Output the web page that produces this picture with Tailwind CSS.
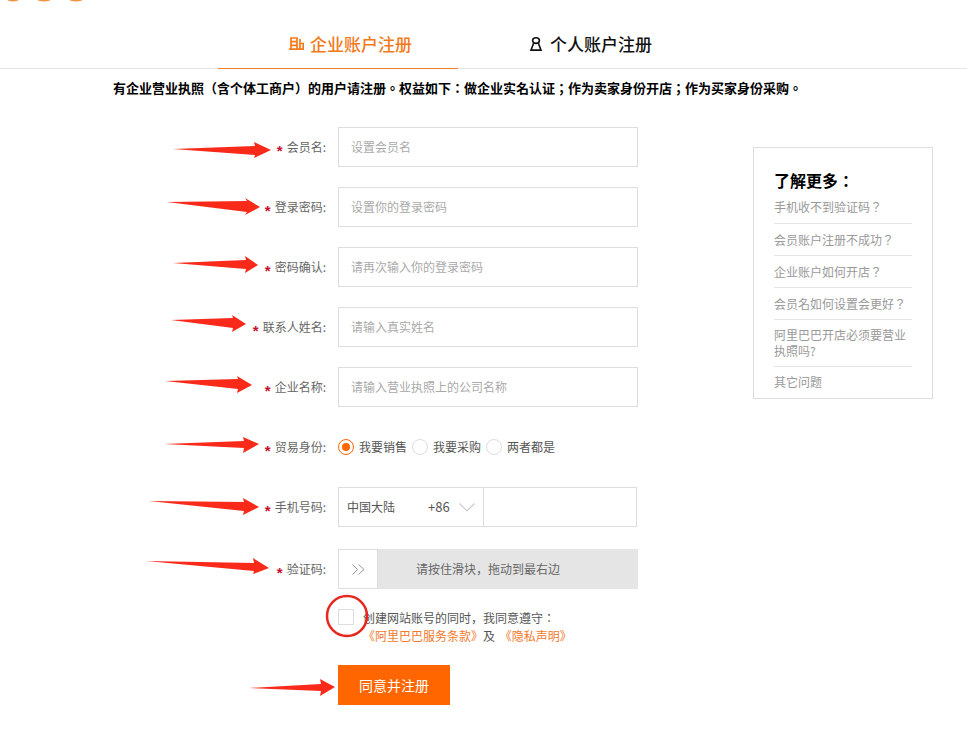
<!doctype html>
<html lang="zh-CN">
  <head>
    <meta charset="utf-8" />
    <title>企业账户注册</title>
    <script src="https://cdn.jsdelivr.net/npm/@tailwindcss/browser@4"></script>
  </head>

  <body class="relative h-[743px] w-[967px] overflow-hidden bg-white font-['Noto_Sans_CJK_SC','Liberation_Sans',sans-serif] text-xs text-[#666]">
    <!-- Cropped logo -->
    <svg class="block h-[3px] w-[120px]" viewBox="0 0 120 3">
      <g fill="#f0923f">
        <ellipse cx="13" cy="-1" rx="6" ry="2.600" />
        <ellipse cx="44" cy="-1" rx="7" ry="2.600" />
        <ellipse cx="76" cy="-1" rx="7" ry="2.600" />
      </g>
    </svg>

    <!-- Tabs -->
    <div class="flex h-[66px] border-b border-[#e5e5e5] pl-[218px]">
      <div class="-mb-px flex h-[66px] w-[240px] items-center gap-[6px] border-b border-[#f0802a] pl-[71px] pt-[16px] text-[17px] leading-none font-medium text-[#f27a1a]">
        <svg class="h-[13px] w-[15px]" viewBox="0 0 15 13" fill="none" stroke="currentColor" stroke-width="1.7">
          <path d="M0 12.100h15M2 12V1h6v11M2 4.600h6M2 8.300h6M11 12V2M11 6.500h3.200V12" />
        </svg>
        <span>企业账户注册</span>
      </div>
      <div class="flex h-[65px] w-[240px] items-center gap-[8px] pl-[72px] pt-[16px] text-[17px] leading-none font-medium text-[#111]">
        <svg class="h-[14px] w-[12px]" viewBox="0 0 12 14" fill="none" stroke="currentColor" stroke-width="1.6">
          <ellipse cx="6" cy="3.600" rx="3.400" ry="2.800" />
          <path d="M3.600 6.200L1 13.100h10L8.400 6.200" />
        </svg>
        <span>个人账户注册</span>
      </div>
    </div>

    <p lang="zh-TW" class="pl-[113px] pt-[10px] font-['Noto_Sans_CJK_TC',sans-serif] text-[13px] leading-[18px] font-bold text-black">有企业营业执照（含个体工商户）的用户请注册。权益如下：做企业实名认证；作为卖家身份开店；作为买家身份采购。</p>

    <div class="flex pt-[30px]">
      <!-- Form -->
      <form class="w-[638px]">
        <div class="mb-5 flex h-10 items-center">
          <label class="w-[326px] text-right"><span class="mr-[4px] align-[-4px] font-['Liberation_Sans'] text-[15px] leading-[0] font-bold text-[#c8102e]">*</span>会员名:</label>
          <div class="ml-3 flex h-10 w-[300px] items-center border border-[#ddd] pl-3 text-[#aaa]">设置会员名</div>
        </div>
        <div class="mb-5 flex h-10 items-center">
          <label class="w-[326px] text-right"><span class="mr-[4px] align-[-4px] font-['Liberation_Sans'] text-[15px] leading-[0] font-bold text-[#c8102e]">*</span>登录密码:</label>
          <div class="ml-3 flex h-10 w-[300px] items-center border border-[#ddd] pl-3 text-[#aaa]">设置你的登录密码</div>
        </div>
        <div class="mb-5 flex h-10 items-center">
          <label class="w-[326px] text-right"><span class="mr-[4px] align-[-4px] font-['Liberation_Sans'] text-[15px] leading-[0] font-bold text-[#c8102e]">*</span>密码确认:</label>
          <div class="ml-3 flex h-10 w-[300px] items-center border border-[#ddd] pl-3 text-[#aaa]">请再次输入你的登录密码</div>
        </div>
        <div class="mb-5 flex h-10 items-center">
          <label class="w-[326px] text-right"><span class="mr-[4px] align-[-4px] font-['Liberation_Sans'] text-[15px] leading-[0] font-bold text-[#c8102e]">*</span>联系人姓名:</label>
          <div class="ml-3 flex h-10 w-[300px] items-center border border-[#ddd] pl-3 text-[#aaa]">请输入真实姓名</div>
        </div>
        <div class="mb-5 flex h-10 items-center">
          <label class="w-[326px] text-right"><span class="mr-[4px] align-[-4px] font-['Liberation_Sans'] text-[15px] leading-[0] font-bold text-[#c8102e]">*</span>企业名称:</label>
          <div class="ml-3 flex h-10 w-[300px] items-center border border-[#ddd] pl-3 text-[#aaa]">请输入营业执照上的公司名称</div>
        </div>
        <div class="mb-5 flex h-10 items-center">
          <label class="w-[326px] text-right"><span class="mr-[4px] align-[-4px] font-['Liberation_Sans'] text-[15px] leading-[0] font-bold text-[#c8102e]">*</span>贸易身份:</label>
          <div class="ml-3 flex items-center text-[#555]">
            <span class="flex h-4 w-4 items-center justify-center rounded-full border border-[#f60]"><span class="h-2 w-2 rounded-full bg-[#f60]"></span></span>
            <span class="ml-[5px]">我要销售</span>
            <span class="ml-[5px] h-4 w-4 rounded-full border border-[#ddd]"></span>
            <span class="ml-[5px]">我要采购</span>
            <span class="ml-[5px] h-4 w-4 rounded-full border border-[#ddd]"></span>
            <span class="ml-[5px]">两者都是</span>
          </div>
        </div>
        <div class="mb-[22px] flex h-10 items-center">
          <label class="w-[326px] text-right"><span class="mr-[4px] align-[-4px] font-['Liberation_Sans'] text-[15px] leading-[0] font-bold text-[#c8102e]">*</span>手机号码:</label>
          <div class="ml-3 flex h-10 w-[299px] border border-[#ddd] text-[#555]">
            <div class="flex w-[145px] items-center border-r border-[#ddd] pl-[8px]">
              <span class="w-[81px]">中国大陆</span>
              <span class="text-[13px]">+86</span>
              <svg class="ml-[9px] h-[9px] w-[16px]" viewBox="0 0 16 9" fill="none" stroke="#ccc" stroke-width="1.2"><path d="M0.500 0.500L8 8l7.500-7.500" /></svg>
            </div>
          </div>
        </div>
        <div class="flex h-10 items-center">
          <label class="w-[326px] text-right"><span class="mr-[4px] align-[-4px] font-['Liberation_Sans'] text-[15px] leading-[0] font-bold text-[#c8102e]">*</span>验证码:</label>
          <div class="ml-3 flex h-10 w-[300px] bg-[#e5e5e5]">
            <div class="flex w-10 items-center justify-center border border-[#ddd] bg-white">
              <svg class="h-[11px] w-[13px]" viewBox="0 0 13 11" fill="none" stroke="#999" stroke-width="1"><path d="M0.500 0.500l5 5-5 5M6.500 0.500l5.500 5-5.500 5" /></svg>
            </div>
            <span class="ml-[38px] self-center text-[#666]">请按住滑块，拖动到最右边</span>
          </div>
        </div>

        <!-- Agreement -->
        <div class="ml-[338px] mt-5 flex gap-[9px] leading-[18px] text-[#555]">
          <span class="h-4 w-4 border border-[#ddd]"></span>
          <div>
            <p>创建网站账号的同时，我同意遵守<span lang="zh-TW" class="font-['Noto_Sans_CJK_TC',sans-serif]">：</span></p>
            <p><a class="text-[#f2792b]">《阿里巴巴服务条款》</a>及 <a class="ml-[2px] text-[#f2792b]">《隐私声明》</a></p>
          </div>
        </div>

        <button type="button" class="ml-[338px] mt-5 h-10 w-[112px] bg-[#f60] text-sm text-white">同意并注册</button>
      </form>

      <!-- Help box -->
      <aside lang="zh-TW" class="ml-[115px] mt-5 h-[252px] w-[180px] border border-[#ddd] px-5 pt-[21px] font-['Noto_Sans_CJK_TC',sans-serif] text-[#999]">
        <h3 class="text-base leading-[22px] font-bold text-black">了解更多：</h3>
        <ul>
          <li class="h-[33px] border-b border-[#e5e5e5] pt-[7px] leading-[18px]">手机收不到验证码？</li>
          <li class="h-[32px] border-b border-[#e5e5e5] pt-[7px] leading-[18px]">会员账户注册不成功？</li>
          <li class="h-[32px] border-b border-[#e5e5e5] pt-[7px] leading-[18px]">企业账户如何开店？</li>
          <li class="h-[32px] border-b border-[#e5e5e5] pt-[7px] leading-[18px]">会员名如何设置会更好？</li>
          <li class="h-[47px] border-b border-[#e5e5e5] pt-[7px] leading-[16px]">阿里巴巴开店必须要营业执照吗?</li>
          <li class="pt-[6px] leading-[18px]">其它问题</li>
        </ul>
      </aside>
    </div>

    <!-- Red annotations drawn over the screenshot -->
    <svg class="absolute left-0 top-0 h-[743px] w-[967px]" viewBox="0 0 967 743">
      <g fill="#f92a1a">
        <polygon points="173,149 255,146 254,142 271,150 254,158 255,155" />
        <polygon points="167,202 247,201 245,198 260,207 245,215 247,212" />
        <polygon points="173,263 246,260 245,256 258,265 245,273 246,269" />
        <polygon points="171,320 233,318 232,315 246,324 232,332 233,328" />
        <polygon points="165,381 238,379 237,376 252,385 237,393 238,389" />
        <polygon points="164,444 244,441 243,437 259,444 243,453 244,448" />
        <polygon points="149,501 244,502 243,498 259,507 243,515 244,511" />
        <polygon points="146,561 254,563 253,558 269,568 253,574 254,571" />
        <polygon points="249,688 321,684 320,679 335,687 320,696 321,691" />
      </g>
      <circle cx="347" cy="616" r="20" fill="none" stroke="#e5281e" stroke-width="2.500" />
    </svg>
  </body>
</html>
